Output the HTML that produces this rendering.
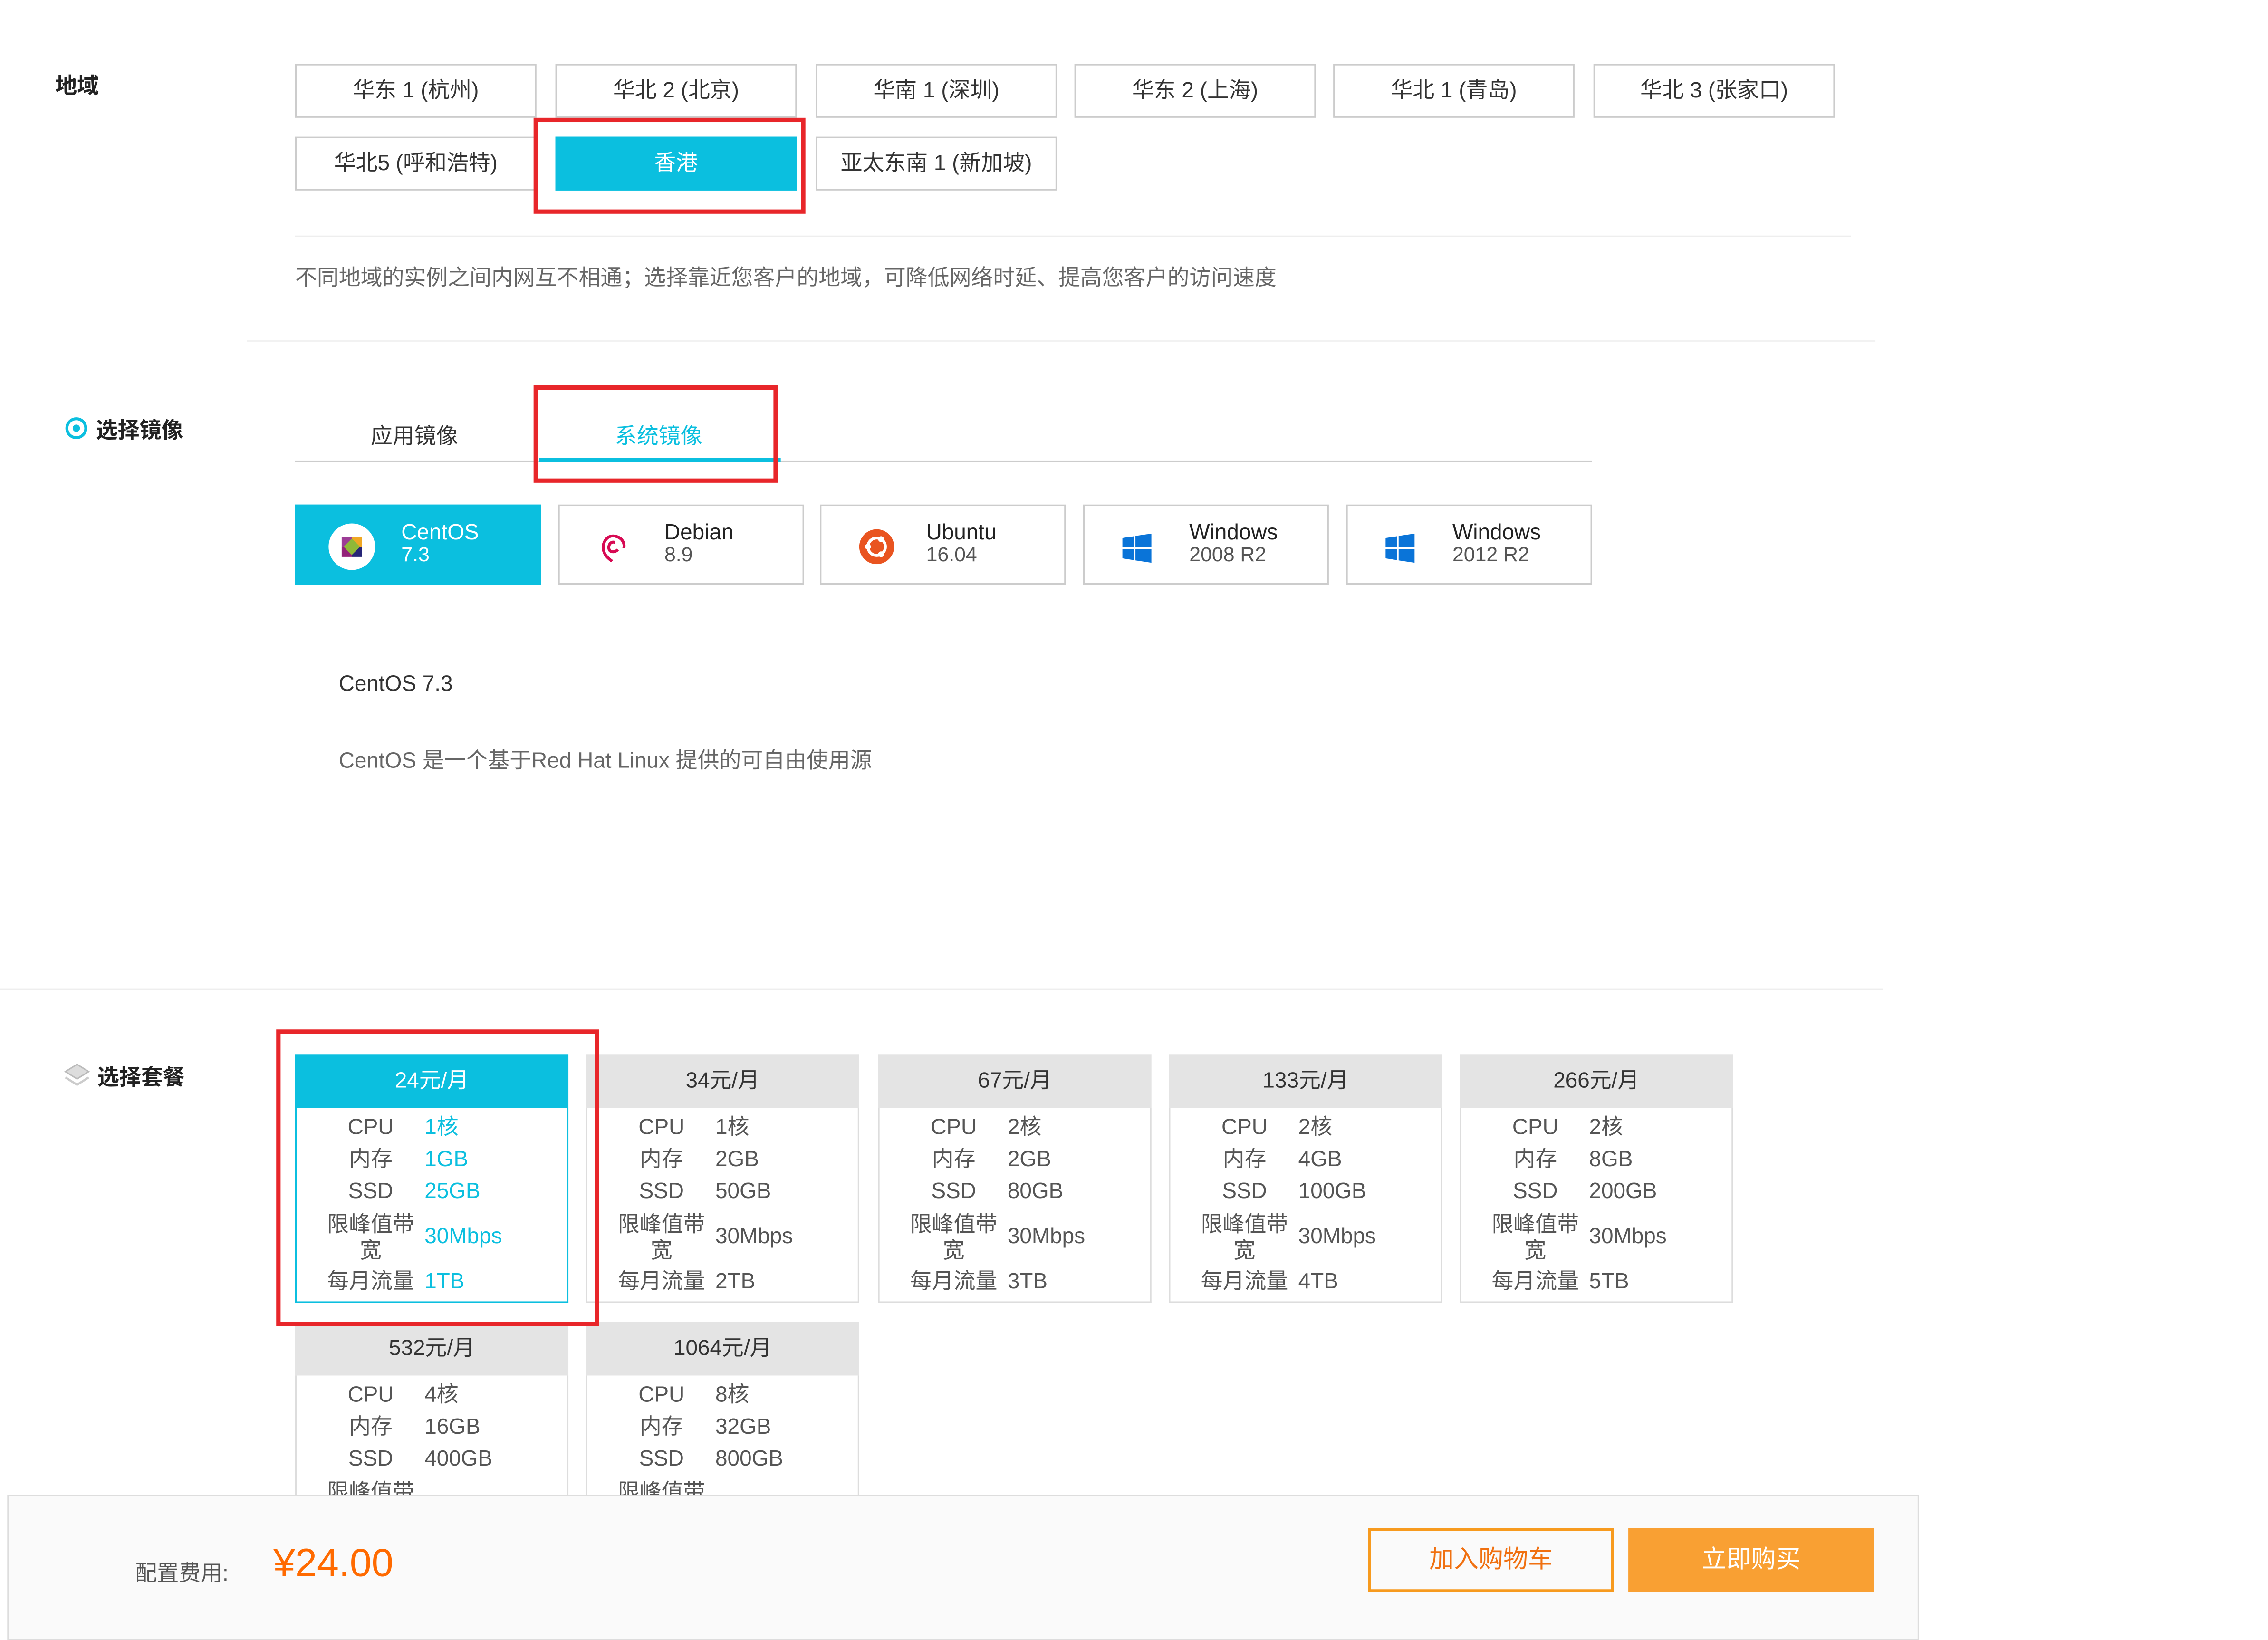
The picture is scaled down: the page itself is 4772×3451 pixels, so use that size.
<!DOCTYPE html>
<html><head><meta charset="utf-8">
<style>
html,body{margin:0;padding:0;background:#fff;width:4772px;height:3436px;overflow:hidden}
#w{position:absolute;left:0;top:0;width:1560px;height:1123px;transform:scale(3.059,3.0597);transform-origin:0 0;font-family:"Liberation Sans","Noto Sans CJK SC",sans-serif;color:#333}
.a{position:absolute}
.btn{position:absolute;height:37px;width:166px;border:1px solid #ccc;box-sizing:border-box;text-align:center;line-height:35px;font-size:15px;color:#333;background:#fff}
.sel{background:#0bbfdf;border-color:#0bbfdf;color:#fff}
.red{position:absolute;border:3px solid #e8262a;box-sizing:border-box}
.os{position:absolute;top:347px;height:55px;width:169px;border:1px solid #ccc;box-sizing:border-box;background:#fff}
.os .n{position:absolute;left:72px;top:11px;font-size:15px;line-height:15px;color:#222}
.os .v{font-size:14px;color:#555}
.pk{position:absolute;width:188px;box-sizing:border-box}
.pk .h{height:37px;background:#e4e4e4;text-align:center;line-height:37px;font-size:15px;color:#333}
.pk .b{border:1px solid #ddd;border-top:none;background:#fff;height:133px;position:relative;font-size:15px;color:#555}
.pk .l{position:absolute;left:16px;width:70px;text-align:center;line-height:18px}
.pk .v{position:absolute;left:88px;line-height:18px}
.pk.s .h{background:#0bbfdf;color:#fff}
.pk.s .b{border:1px solid #0bbfdf;border-top:none}
.pk.s .v{color:#0bbfdf}
</style></head><body><div id="w">

<div class="a" style="left:38px;top:48px;font-size:15px;font-weight:bold;color:#222">地域</div>
<div class="btn" style="left:203px;top:44px">华东 1 (杭州)</div>
<div class="btn" style="left:382px;top:44px">华北 2 (北京)</div>
<div class="btn" style="left:561px;top:44px">华南 1 (深圳)</div>
<div class="btn" style="left:739px;top:44px">华东 2 (上海)</div>
<div class="btn" style="left:917px;top:44px">华北 1 (青岛)</div>
<div class="btn" style="left:1096px;top:44px">华北 3 (张家口)</div>
<div class="btn" style="left:203px;top:94px">华北5 (呼和浩特)</div>
<div class="btn sel" style="left:382px;top:94px">香港</div>
<div class="btn" style="left:561px;top:94px">亚太东南 1 (新加坡)</div>
<div class="red" style="left:367px;top:81px;width:187px;height:66px"></div>
<div class="a" style="left:203px;top:162px;width:1070px;height:1px;background:#eee"></div>
<div class="a" style="left:203px;top:180px;font-size:15px;color:#666">不同地域的实例之间内网互不相通；选择靠近您客户的地域，可降低网络时延、提高您客户的访问速度</div>
<div class="a" style="left:170px;top:234px;width:1120px;height:1px;background:#f2f2f2"></div>

<div class="a" style="left:45px;top:287px;width:11px;height:11px;border:2px solid #0bbfdf;border-radius:50%"></div>
<div class="a" style="left:50px;top:292px;width:5px;height:5px;background:#0bbfdf;border-radius:50%"></div>
<div class="a" style="left:66px;top:285px;font-size:15px;font-weight:bold;color:#222">选择镜像</div>
<div class="a" style="left:255px;top:289px;font-size:15px;color:#333">应用镜像</div>
<div class="a" style="left:423px;top:289px;font-size:15px;color:#0bbfdf">系统镜像</div>
<div class="a" style="left:203px;top:317px;width:892px;height:1px;background:#ccc"></div>
<div class="a" style="left:371px;top:315px;width:166px;height:3px;background:#0bbfdf"></div>
<div class="red" style="left:367px;top:265px;width:168px;height:67px"></div>

<div class="os" style="left:203px;background:#0bbfdf;border-color:#0bbfdf">
 <div class="a" style="left:22px;top:12px;width:32px;height:32px;border-radius:50%;background:#fff"></div>
 <svg class="a" style="left:28px;top:18px" width="20" height="20" viewBox="0 0 20 20"><rect x="3" y="3" width="7" height="7" fill="#9c3c96"/><rect x="10" y="3" width="7" height="7" fill="#efa724"/><rect x="3" y="10" width="7" height="7" fill="#932279"/><rect x="10" y="10" width="7" height="7" fill="#262577"/><rect x="6" y="6" width="8" height="8" fill="#8fb838" transform="rotate(45 10 10)"/></svg>
 <div class="n" style="color:#fff">CentOS<br><span class="v" style="color:#fff">7.3</span></div></div>
<div class="os" style="left:384px">
 <svg class="a" style="left:26px;top:17px" width="22" height="22" viewBox="0 0 22 22"><path d="M13 4 C7 2 3 8 4 13 C5 18 9 20 10 21 M12 8 C9 7 7 10 8 13 C9 15 12 15 14 13 M13 4 C17 5 19 9 18 12" fill="none" stroke="#d70a53" stroke-width="2"/></svg>
 <div class="n">Debian<br><span class="v">8.9</span></div></div>
<div class="os" style="left:564px">
 <svg class="a" style="left:26px;top:16px" width="24" height="24" viewBox="0 0 24 24"><circle cx="12" cy="12" r="12" fill="#e95420"/><circle cx="12" cy="12" r="6" fill="none" stroke="#fff" stroke-width="2"/><circle cx="6" cy="12" r="2" fill="#fff"/><circle cx="15" cy="6.8" r="2" fill="#fff"/><circle cx="15" cy="17.2" r="2" fill="#fff"/></svg>
 <div class="n">Ubuntu<br><span class="v">16.04</span></div></div>
<div class="os" style="left:745px">
 <svg class="a" style="left:26px;top:19px" width="20" height="20" viewBox="0 0 20 20"><path d="M0 3 L8 1.8 V9.5 H0Z M9 1.6 L20 0 V9.5 H9Z M0 10.5 H8 V18.2 L0 17Z M9 10.5 H20 V20 L9 18.4Z" fill="#0a74d8"/></svg>
 <div class="n">Windows<br><span class="v">2008 R2</span></div></div>
<div class="os" style="left:926px">
 <svg class="a" style="left:26px;top:19px" width="20" height="20" viewBox="0 0 20 20"><path d="M0 3 L8 1.8 V9.5 H0Z M9 1.6 L20 0 V9.5 H9Z M0 10.5 H8 V18.2 L0 17Z M9 10.5 H20 V20 L9 18.4Z" fill="#0a74d8"/></svg>
 <div class="n">Windows<br><span class="v">2012 R2</span></div></div>

<div class="a" style="left:233px;top:462px;font-size:15px;color:#333">CentOS 7.3</div>
<div class="a" style="left:233px;top:512px;font-size:15px;color:#666">CentOS 是一个基于Red Hat Linux 提供的可自由使用源</div>
<div class="a" style="left:0;top:680px;width:1295px;height:1px;background:#eee"></div>

<svg class="a" style="left:44px;top:731px" width="18" height="18" viewBox="0 0 18 18"><path d="M9 1 L17 6 L9 11 L1 6Z" fill="#ddd" stroke="#bbb"/><path d="M1 10 L9 15 L17 10" fill="none" stroke="#ccc" stroke-width="1.5"/></svg>
<div class="a" style="left:67px;top:730px;font-size:15px;font-weight:bold;color:#222">选择套餐</div>

<div class="pk s" style="left:203px;top:725px"><div class="h">24元/月</div><div class="b">
<div class="l" style="top:5px">CPU</div><div class="v" style="top:5px">1核</div>
<div class="l" style="top:27px">内存</div><div class="v" style="top:27px">1GB</div>
<div class="l" style="top:49px">SSD</div><div class="v" style="top:49px">25GB</div>
<div class="l" style="top:72px">限峰值带<br>宽</div><div class="v" style="top:80px">30Mbps</div>
<div class="l" style="top:111px">每月流量</div><div class="v" style="top:111px">1TB</div></div></div>
<div class="pk" style="left:403px;top:725px"><div class="h">34元/月</div><div class="b">
<div class="l" style="top:5px">CPU</div><div class="v" style="top:5px">1核</div>
<div class="l" style="top:27px">内存</div><div class="v" style="top:27px">2GB</div>
<div class="l" style="top:49px">SSD</div><div class="v" style="top:49px">50GB</div>
<div class="l" style="top:72px">限峰值带<br>宽</div><div class="v" style="top:80px">30Mbps</div>
<div class="l" style="top:111px">每月流量</div><div class="v" style="top:111px">2TB</div></div></div>
<div class="pk" style="left:604px;top:725px"><div class="h">67元/月</div><div class="b">
<div class="l" style="top:5px">CPU</div><div class="v" style="top:5px">2核</div>
<div class="l" style="top:27px">内存</div><div class="v" style="top:27px">2GB</div>
<div class="l" style="top:49px">SSD</div><div class="v" style="top:49px">80GB</div>
<div class="l" style="top:72px">限峰值带<br>宽</div><div class="v" style="top:80px">30Mbps</div>
<div class="l" style="top:111px">每月流量</div><div class="v" style="top:111px">3TB</div></div></div>
<div class="pk" style="left:804px;top:725px"><div class="h">133元/月</div><div class="b">
<div class="l" style="top:5px">CPU</div><div class="v" style="top:5px">2核</div>
<div class="l" style="top:27px">内存</div><div class="v" style="top:27px">4GB</div>
<div class="l" style="top:49px">SSD</div><div class="v" style="top:49px">100GB</div>
<div class="l" style="top:72px">限峰值带<br>宽</div><div class="v" style="top:80px">30Mbps</div>
<div class="l" style="top:111px">每月流量</div><div class="v" style="top:111px">4TB</div></div></div>
<div class="pk" style="left:1004px;top:725px"><div class="h">266元/月</div><div class="b">
<div class="l" style="top:5px">CPU</div><div class="v" style="top:5px">2核</div>
<div class="l" style="top:27px">内存</div><div class="v" style="top:27px">8GB</div>
<div class="l" style="top:49px">SSD</div><div class="v" style="top:49px">200GB</div>
<div class="l" style="top:72px">限峰值带<br>宽</div><div class="v" style="top:80px">30Mbps</div>
<div class="l" style="top:111px">每月流量</div><div class="v" style="top:111px">5TB</div></div></div>
<div class="pk" style="left:203px;top:909px"><div class="h">532元/月</div><div class="b">
<div class="l" style="top:5px">CPU</div><div class="v" style="top:5px">4核</div>
<div class="l" style="top:27px">内存</div><div class="v" style="top:27px">16GB</div>
<div class="l" style="top:49px">SSD</div><div class="v" style="top:49px">400GB</div>
<div class="l" style="top:72px">限峰值带<br>宽</div><div class="v" style="top:80px">30Mbps</div></div></div>
<div class="pk" style="left:403px;top:909px"><div class="h">1064元/月</div><div class="b">
<div class="l" style="top:5px">CPU</div><div class="v" style="top:5px">8核</div>
<div class="l" style="top:27px">内存</div><div class="v" style="top:27px">32GB</div>
<div class="l" style="top:49px">SSD</div><div class="v" style="top:49px">800GB</div>
<div class="l" style="top:72px">限峰值带<br>宽</div><div class="v" style="top:80px">30Mbps</div></div></div>
<div class="red" style="left:190px;top:708px;width:222px;height:204px"></div>

<div class="a" style="left:5px;top:1028px;width:1315px;height:100px;background:#fafafa;border:1px solid #ddd;box-sizing:border-box"></div>
<div class="a" style="left:93px;top:1071px;font-size:15px;color:#555">配置费用:</div>
<div class="a" style="left:188px;top:1060px;font-size:27px;color:#ff6a00">¥24.00</div>
<div class="a" style="left:941px;top:1051px;width:169px;height:44px;border:2px solid #f79a1e;box-sizing:border-box;text-align:center;line-height:40px;font-size:17px;color:#f07010;background:#fafafa">加入购物车</div>
<div class="a" style="left:1120px;top:1051px;width:169px;height:44px;background:#f9a033;text-align:center;line-height:44px;font-size:17px;color:#fff">立即购买</div>
</div></body></html>
